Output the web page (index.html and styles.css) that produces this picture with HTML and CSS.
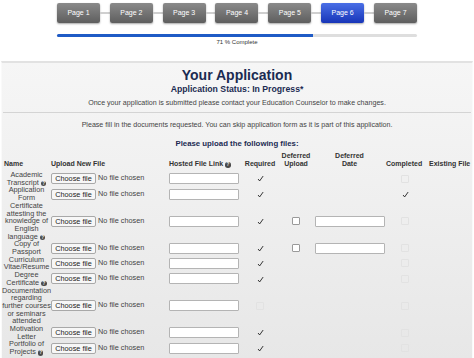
FILE: index.html
```html
<!DOCTYPE html>
<html lang="en">
<head>
    <meta charset="UTF-8">
    <meta name="viewport" content="width=device-width, initial-scale=1.0">
    <title>Your Application</title>
    <link rel="stylesheet" href="styles.css">
</head>
<body>

    <div class="wizard">
        <div class="steps">
            <span class="step">Page 1</span><span class="link"></span>
            <span class="step">Page 2</span><span class="link"></span>
            <span class="step">Page 3</span><span class="link"></span>
            <span class="step">Page 4</span><span class="link"></span>
            <span class="step">Page 5</span><span class="link"></span>
            <span class="step active">Page 6</span><span class="link"></span>
            <span class="step">Page 7</span>
        </div>
        <div class="progress"><div class="progress-bar" style="width: 71%"></div></div>
        <div class="progress-text">71 % Complete</div>
    </div>

    <div class="panel">
        <h1>Your Application</h1>
        <h3>Application Status: In Progress*</h3>
        <p class="note">Once your application is submitted please contact your Education Counselor to make changes.</p>
        <hr>
        <p class="note">Please fill in the documents requested. You can skip application form as it is part of this application.</p>
        <h4>Please upload the following files:</h4>

        <table class="files">
            <colgroup>
                <col class="w-name">
                <col class="w-upload">
                <col class="w-link">
                <col class="w-req">
                <col class="w-def">
                <col class="w-date">
                <col class="w-done">
                <col class="w-exist">
            </colgroup>
            <thead>
                <tr>
                    <th class="c-name">Name</th>
                    <th class="c-upload">Upload New File</th>
                    <th class="c-link">Hosted File Link <span class="info">?</span></th>
                    <th class="c-req">Required</th>
                    <th class="c-def">Deferred<br>Upload</th>
                    <th class="c-date">Deferred<br>Date</th>
                    <th class="c-done">Completed</th>
                    <th class="c-exist">Existing File</th>
                </tr>
            </thead>
            <tbody>
                <tr>
                    <td class="c-name">Academic Transcript <span class="info">?</span></td>
                    <td class="c-upload"><span class="file-btn">Choose file</span> No file chosen</td>
                    <td class="c-link"><span class="text-box"></span></td>
                    <td class="c-req"><svg class="tick" viewBox="0 0 8 8"><path d="M1.2 4.6 L3 6.8 L7 1.2"/></svg></td>
                    <td class="c-def"></td>
                    <td class="c-date"></td>
                    <td class="c-done"><span class="box faded"></span></td>
                    <td class="c-exist"></td>
                </tr>
                <tr>
                    <td class="c-name">Application Form</td>
                    <td class="c-upload"><span class="file-btn">Choose file</span> No file chosen</td>
                    <td class="c-link"><span class="text-box"></span></td>
                    <td class="c-req"><svg class="tick" viewBox="0 0 8 8"><path d="M1.2 4.6 L3 6.8 L7 1.2"/></svg></td>
                    <td class="c-def"></td>
                    <td class="c-date"></td>
                    <td class="c-done"><svg class="tick" viewBox="0 0 8 8"><path d="M1.2 4.6 L3 6.8 L7 1.2"/></svg></td>
                    <td class="c-exist"></td>
                </tr>
                <tr>
                    <td class="c-name">Certificate attesting the knowledge of English language <span class="info">?</span></td>
                    <td class="c-upload"><span class="file-btn">Choose file</span> No file chosen</td>
                    <td class="c-link"><span class="text-box"></span></td>
                    <td class="c-req"><svg class="tick" viewBox="0 0 8 8"><path d="M1.2 4.6 L3 6.8 L7 1.2"/></svg></td>
                    <td class="c-def"><span class="box"></span></td>
                    <td class="c-date"><span class="text-box date"></span></td>
                    <td class="c-done"><span class="box faded"></span></td>
                    <td class="c-exist"></td>
                </tr>
                <tr>
                    <td class="c-name">Copy of Passport</td>
                    <td class="c-upload"><span class="file-btn">Choose file</span> No file chosen</td>
                    <td class="c-link"><span class="text-box"></span></td>
                    <td class="c-req"><svg class="tick" viewBox="0 0 8 8"><path d="M1.2 4.6 L3 6.8 L7 1.2"/></svg></td>
                    <td class="c-def"><span class="box"></span></td>
                    <td class="c-date"><span class="text-box date"></span></td>
                    <td class="c-done"><span class="box faded"></span></td>
                    <td class="c-exist"></td>
                </tr>
                <tr>
                    <td class="c-name">Curriculum Vitae/Resume</td>
                    <td class="c-upload"><span class="file-btn">Choose file</span> No file chosen</td>
                    <td class="c-link"><span class="text-box"></span></td>
                    <td class="c-req"><svg class="tick" viewBox="0 0 8 8"><path d="M1.2 4.6 L3 6.8 L7 1.2"/></svg></td>
                    <td class="c-def"></td>
                    <td class="c-date"></td>
                    <td class="c-done"><span class="box faded"></span></td>
                    <td class="c-exist"></td>
                </tr>
                <tr>
                    <td class="c-name">Degree Certificate <span class="info">?</span></td>
                    <td class="c-upload"><span class="file-btn">Choose file</span> No file chosen</td>
                    <td class="c-link"><span class="text-box"></span></td>
                    <td class="c-req"><svg class="tick" viewBox="0 0 8 8"><path d="M1.2 4.6 L3 6.8 L7 1.2"/></svg></td>
                    <td class="c-def"></td>
                    <td class="c-date"></td>
                    <td class="c-done"><span class="box faded"></span></td>
                    <td class="c-exist"></td>
                </tr>
                <tr>
                    <td class="c-name">Documentation regarding further courses or seminars attended</td>
                    <td class="c-upload"><span class="file-btn">Choose file</span> No file chosen</td>
                    <td class="c-link"><span class="text-box"></span></td>
                    <td class="c-req"><span class="box faded"></span></td>
                    <td class="c-def"></td>
                    <td class="c-date"></td>
                    <td class="c-done"><span class="box faded"></span></td>
                    <td class="c-exist"></td>
                </tr>
                <tr>
                    <td class="c-name">Motivation Letter</td>
                    <td class="c-upload"><span class="file-btn">Choose file</span> No file chosen</td>
                    <td class="c-link"><span class="text-box"></span></td>
                    <td class="c-req"><svg class="tick" viewBox="0 0 8 8"><path d="M1.2 4.6 L3 6.8 L7 1.2"/></svg></td>
                    <td class="c-def"></td>
                    <td class="c-date"></td>
                    <td class="c-done"><span class="box faded"></span></td>
                    <td class="c-exist"></td>
                </tr>
                <tr>
                    <td class="c-name">Portfolio of Projects <span class="info">?</span></td>
                    <td class="c-upload"><span class="file-btn">Choose file</span> No file chosen</td>
                    <td class="c-link"><span class="text-box"></span></td>
                    <td class="c-req"><svg class="tick" viewBox="0 0 8 8"><path d="M1.2 4.6 L3 6.8 L7 1.2"/></svg></td>
                    <td class="c-def"></td>
                    <td class="c-date"></td>
                    <td class="c-done"><span class="box faded"></span></td>
                    <td class="c-exist"></td>
                </tr>
            </tbody>
        </table>
    </div>

</body>
</html>
```

FILE: styles.css
```css
body {
    font-family: "Liberation Sans", Arial, sans-serif;
    background-color: #fff;
    color: #333;
    margin: 0;
    padding: 0;
}

.wizard {
    width: 360px;
    margin: 0 auto;
    padding-top: 3px;
    height: 58px;
}

.steps {
    display: flex;
    align-items: center;
}

.step {
    width: 43px;
    height: 20px;
    line-height: 19px;
    text-align: center;
    font-size: 7px;
    color: #fff;
    background: linear-gradient(#8a8a8a, #5e5e5e);
    border-radius: 2px;
    box-shadow: 0 1px 2px rgba(0, 0, 0, 0.35);
    flex-shrink: 0;
}

.step.active {
    background: linear-gradient(#4a6fe6, #1735b8);
}

.link {
    flex: 1;
    height: 2px;
    background-color: #cfcfcf;
}

.progress {
    margin-top: 11px;
    height: 3px;
    background-color: #dedede;
    border-radius: 2px;
}

.progress-bar {
    height: 3px;
    background-color: #1f5bc6;
    border-radius: 2px 0 0 2px;
}

.progress-text {
    margin-top: 2px;
    text-align: center;
    font-size: 6px;
    color: #333;
}

.panel {
    margin: 0 1px;
    padding: 5px 0 4px;
    border-top: 2px solid #e2e2e2;
    border-left: 1px solid #fafafa;
    border-right: 1px solid #fafafa;
    background: linear-gradient(#f6f6f6, #e7e7e7);
    text-align: center;
}

h1 {
    margin: 0;
    font-size: 14px;
    line-height: 15px;
    color: #1b2b52;
}

h3 {
    margin: 1px 0 0;
    font-size: 8.7px;
    line-height: 10px;
    color: #1b2b52;
}

.note {
    margin: 5px 0 0;
    font-size: 7.1px;
    line-height: 9px;
    color: #444;
}

hr {
    border: none;
    border-top: 1px solid #d4d4d4;
    margin: 4px 1px 0;
}

hr + .note {
    margin-top: 8px;
}

h4 {
    margin: 9px 0 0;
    font-size: 7.8px;
    line-height: 9px;
    color: #1b2b52;
}

.files {
    table-layout: fixed;
    width: 470px;
    border-collapse: collapse;
    margin-top: 4px;
    font-size: 7.3px;
    color: #444;
}

.w-name { width: 49px; }
.w-upload { width: 118px; }
.w-link { width: 73px; }
.w-req { width: 36px; }
.w-def { width: 36px; }
.w-date { width: 71px; }
.w-done { width: 40px; }
.w-exist { width: 47px; }

.files th {
    font-size: 7px;
    line-height: 8px;
    color: #333;
    vertical-align: bottom;
    padding: 0 0 3px;
    white-space: nowrap;
}

.files td {
    padding: 0;
    line-height: 7.7px;
    vertical-align: middle;
}

.files th.c-name { text-align: left; padding-left: 2px; }
.files td.c-name { text-align: center; }
.c-upload { text-align: left; white-space: nowrap; }
.c-link { text-align: left; }
.c-req { text-align: center; }
.c-def { text-align: center; }
.c-date { text-align: left; }
.files th.c-date { text-align: center; }
.c-done { text-align: center; }
.files th.c-done { text-align: left; padding-left: 1px; }
.c-exist { text-align: left; }
.files th.c-exist { padding-left: 4px; }

.tick {
    width: 7px;
    height: 7px;
    vertical-align: middle;
    fill: none;
    stroke: #1a1a1a;
    stroke-width: 1;
}

.file-btn {
    display: inline-block;
    width: 43px;
    height: 9px;
    line-height: 9px;
    text-align: center;
    background-color: #f7f7f7;
    border: 1px solid #a8a8a8;
    border-radius: 2px;
    color: #222;
    vertical-align: middle;
}

.text-box {
    display: inline-block;
    width: 68px;
    height: 9px;
    background-color: #fff;
    border: 1px solid #b4b4b4;
    border-radius: 1px;
    vertical-align: middle;
}

.text-box.date {
    margin-left: 1px;
}

.box {
    display: inline-block;
    width: 6px;
    height: 6px;
    background-color: #fff;
    border: 1px solid #9a9a9a;
    border-radius: 1px;
    vertical-align: middle;
}

.box.faded {
    background-color: transparent;
    border-color: #e2e2e2;
}

.info {
    display: inline-block;
    width: 5.5px;
    height: 5.5px;
    line-height: 5.5px;
    border-radius: 50%;
    background-color: #4a4a4a;
    color: #fff;
    font-size: 4.5px;
    font-weight: bold;
    text-align: center;
    vertical-align: 0;
}
```
